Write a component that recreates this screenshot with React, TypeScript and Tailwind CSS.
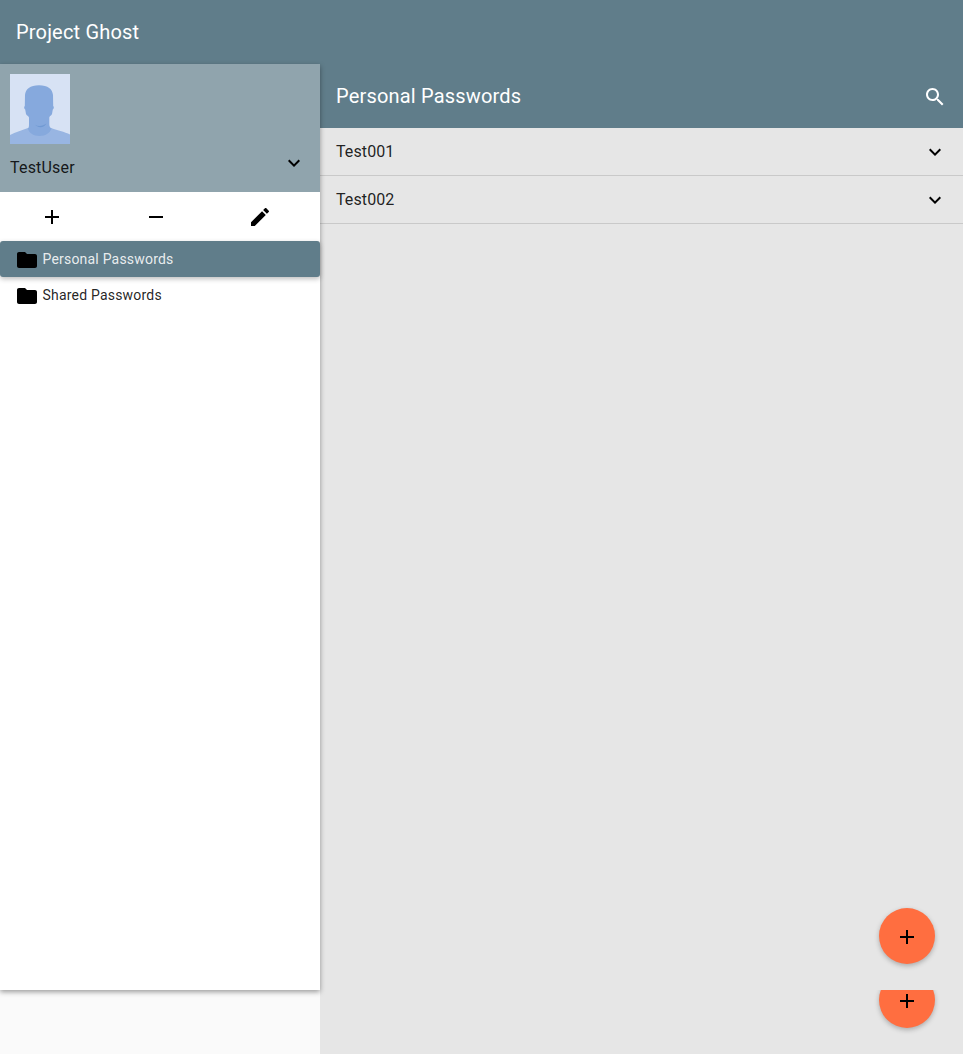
import type { ReactNode } from "react";

const paths = {
  plus: "M19 13h-6v6h-2v-6H5v-2h6V5h2v6h6v2z",
  minus: "M19 13H5v-2h14v2z",
  edit: "M3 17.25V21h3.75L17.81 9.94l-3.75-3.75L3 17.25zM20.71 7.04c.39-.39.39-1.02 0-1.41l-2.34-2.34c-.39-.39-1.02-.39-1.41 0l-1.83 1.83 3.75 3.75 1.83-1.83z",
  folder: "M10 4H4c-1.1 0-1.99.9-1.99 2L2 18c0 1.1.9 2 2 2h16c1.1 0 2-.9 2-2V8c0-1.1-.9-2-2-2h-8l-2-2z",
  expand: "M16.59 8.59L12 13.17 7.41 8.59 6 10l6 6 6-6z",
  search:
    "M15.5 14h-.79l-.28-.27C15.41 12.59 16 11.11 16 9.5 16 5.91 13.09 3 9.5 3S3 5.91 3 9.5 5.91 16 9.5 16c1.61 0 3.09-.59 4.23-1.57l.27.28v.79l5 4.99L20.49 19l-4.99-5zm-6 0C7.01 14 5 11.99 5 9.5S7.01 5 9.5 5 14 7.01 14 9.5 11.99 14 9.5 14z",
};

function Icon({ name, className = "" }: { name: keyof typeof paths; className?: string }) {
  return (
    <svg viewBox="0 0 24 24" className={`size-6 shrink-0 fill-current ${className}`}>
      <path d={paths[name]} />
    </svg>
  );
}

function Avatar() {
  return (
    <svg viewBox="0 0 60 70" className="block h-[70px] w-[60px]">
      <rect width="60" height="70" fill="#d7e2f4" />
      <path d="M0 70V61C5 58 13 56 18 54L41 54C46 56 55 58 60 60.5V70Z" fill="#98b5e2" />
      <path
        d="M19 43.5C18.7 42 16.5 41.5 16 40L15.2 35.5C14 34.5 13.8 33 14.8 32L15 21C15.5 15 20 11.2 29 11.2C38 11.2 42.5 15 43 21L43.2 32C44.2 33 44 34.5 42.8 35.5L42 40C41.5 41.5 39.5 42 39.3 43.5V50C39.3 52.5 40 53.5 41.5 54.3C40 59 36 62 29.5 62C23 62 19 59 17.8 54.3C19 53.5 19 52.5 19 50Z"
        fill="#86a9dd"
      />
      <path d="M25 50.8C29 53 33 52 36.5 49.5C34.5 53.3 29 55 25 50.8Z" fill="#7099d3" />
    </svg>
  );
}

function ToolButton({ name }: { name: keyof typeof paths }) {
  return (
    <button className="flex h-12 w-[104px] items-center justify-center">
      <Icon name={name} className="translate-y-px" />
    </button>
  );
}

function Folder({ children, active }: { children: ReactNode; active?: boolean }) {
  return (
    <button
      className={`flex h-9 w-full items-center rounded-[3px] pl-[15px] text-left text-sm tracking-[0.2px] ${
        active ? "bg-[#607d8a] text-white/87 shadow-[0_2px_5px_0_rgba(0,0,0,0.26)]" : "text-black/87"
      }`}
    >
      <Icon name="folder" className="translate-y-px text-black" />
      <span className="ml-[3.5px]">{children}</span>
    </button>
  );
}

function Entry({ children }: { children: ReactNode }) {
  return (
    <div className="flex h-12 items-center justify-between border-b border-[#c9c9c9] pr-4 pl-4">
      <span className="tracking-[0.1px]">{children}</span>
      <Icon name="expand" className="text-black" />
    </div>
  );
}

function AddButton() {
  return (
    <button className="flex size-14 items-center justify-center rounded-full bg-[#ff6e40] shadow-[0_2px_5px_0_rgba(0,0,0,0.26)]">
      <Icon name="plus" className="translate-y-px text-black" />
    </button>
  );
}

export default function App() {
  return (
    <div className="flex h-[1054px] flex-col overflow-hidden bg-[#fafafa] font-['Roboto',sans-serif] text-base tracking-[0.2px] text-black/87">
      <header className="flex h-16 shrink-0 items-center bg-[#607d8a] px-4 text-xl tracking-[0.18px] text-white">
        <h1>Project Ghost</h1>
      </header>
      <div className="flex min-h-0 flex-1">
        <aside className="z-10 h-[926px] w-80 shrink-0 bg-white shadow-[0_2px_5px_0_rgba(0,0,0,0.38)]">
          <div className="flex h-32 flex-col bg-[#90a4ad] px-[10px] pt-[10px]">
            <Avatar />
            <div className="flex h-12 items-center justify-between pr-1">
              <span>TestUser</span>
              <Icon name="expand" className="-translate-y-[5px] text-black" />
            </div>
          </div>
          <div className="flex h-[49px] text-black">
            <ToolButton name="plus" />
            <ToolButton name="minus" />
            <ToolButton name="edit" />
          </div>
          <Folder active>Personal Passwords</Folder>
          <Folder>Shared Passwords</Folder>
        </aside>
        <main className="flex min-w-0 flex-1 flex-col bg-[#e6e6e6]">
          <div className="flex h-16 shrink-0 items-center justify-between bg-[#607d8a] pr-4 pl-4 text-xl tracking-[0.18px] text-white">
            <h2>Personal Passwords</h2>
            <Icon name="search" className="translate-y-px text-white" />
          </div>
          <Entry>Test001</Entry>
          <Entry>Test002</Entry>
          <div className="mt-auto flex h-[82px] shrink-0 justify-end pr-7">
            <AddButton />
          </div>
          <div className="flex h-16 shrink-0 items-start justify-end overflow-hidden pr-7">
            <div className="-mt-[18px]">
              <AddButton />
            </div>
          </div>
        </main>
      </div>
    </div>
  );
}
